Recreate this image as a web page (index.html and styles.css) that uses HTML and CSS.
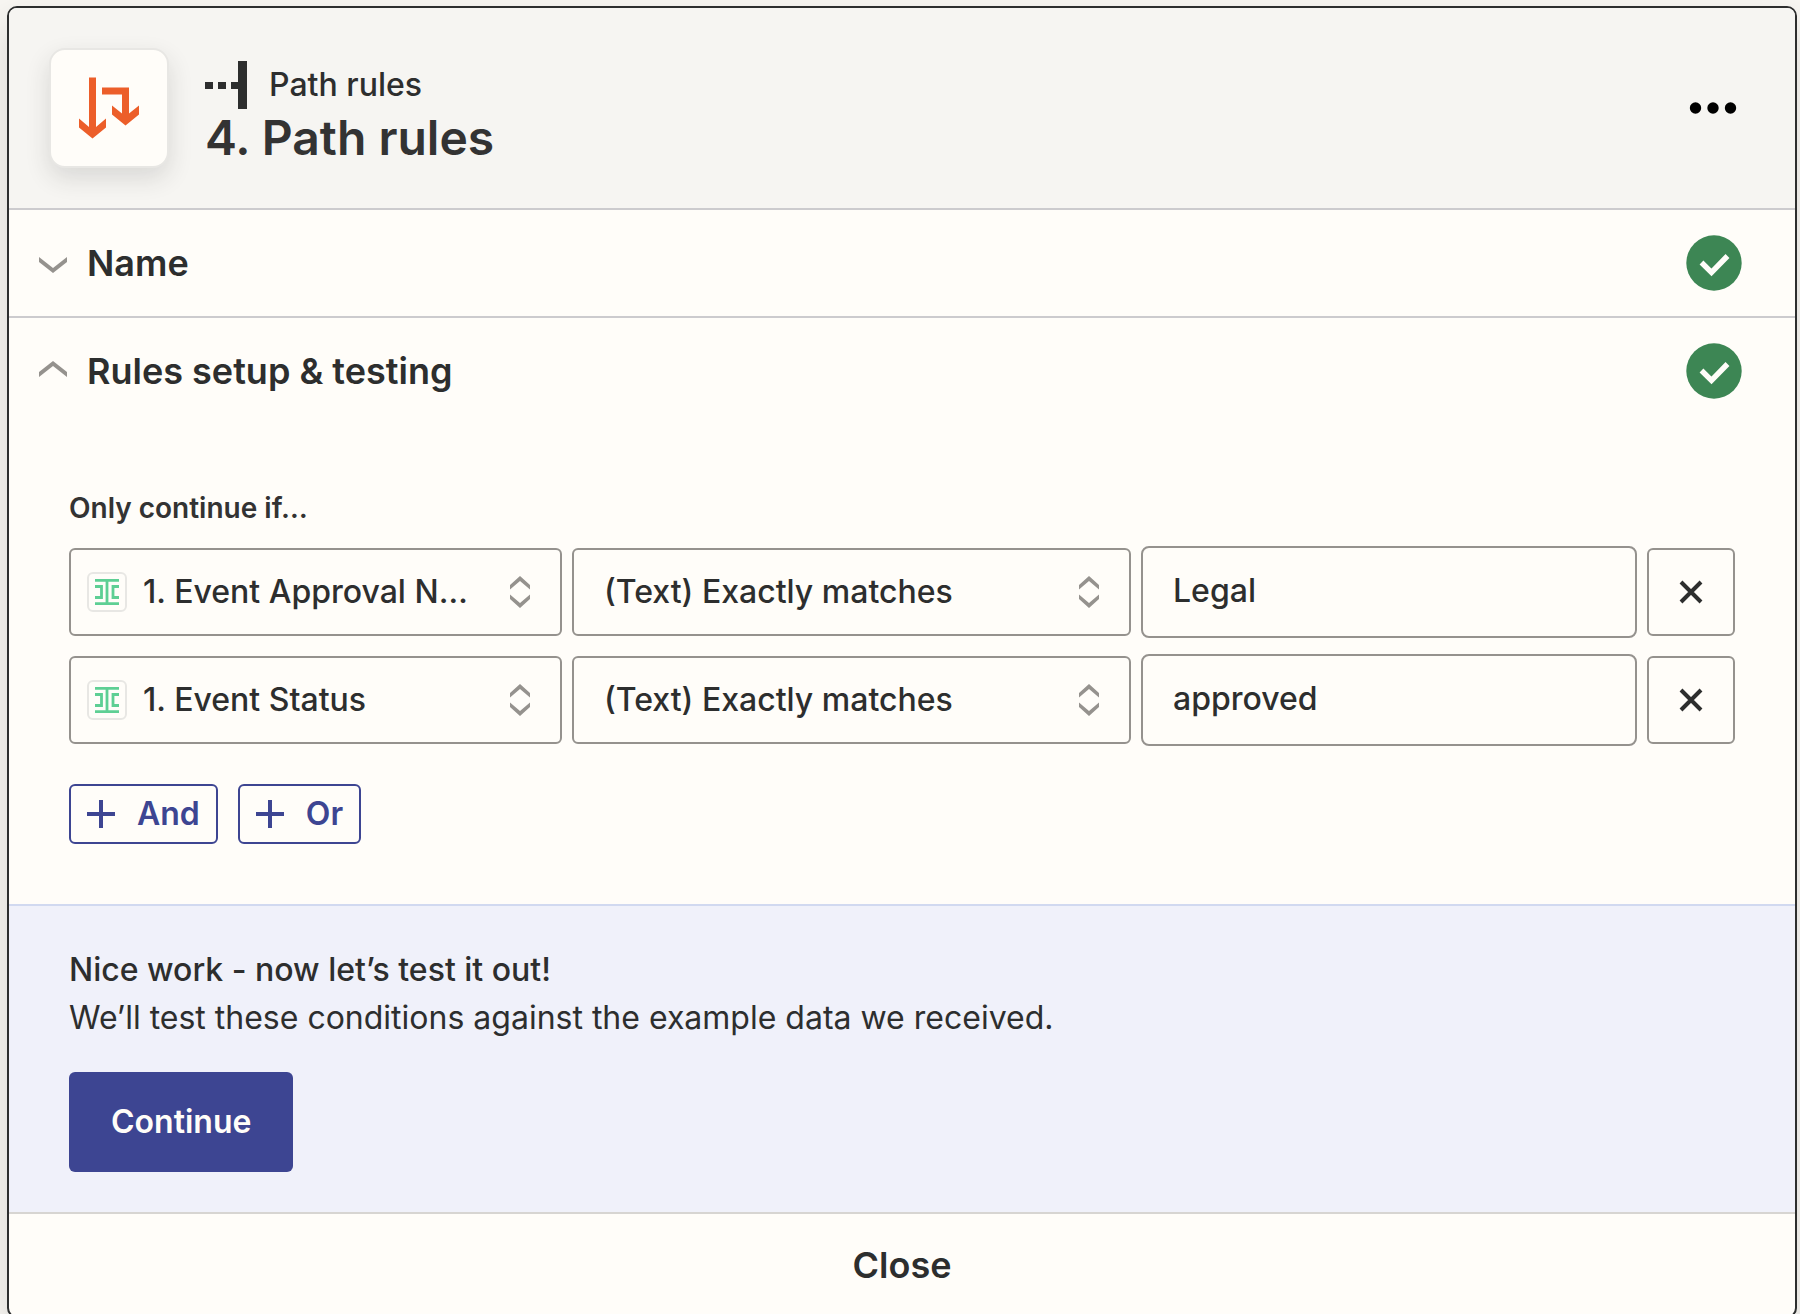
FILE: index.html
```html
<!DOCTYPE html>
<html lang="en">
<head>
  <meta charset="UTF-8">
  <meta name="viewport" content="width=device-width, initial-scale=1">
  <title>Path rules</title>
  <link rel="stylesheet" href="styles.css">
</head>
<body>
  <!-- shared icons -->
  <svg class="sprite" aria-hidden="true">
    <symbol id="icon-check" viewBox="0 0 56 56">
      <circle cx="28" cy="28" r="27.700" fill="#3d8654"/>
      <path d="M15.500 27.500L25.500 37.500L41.500 21" fill="none" stroke="#fffdf9" stroke-width="5.400"/>
    </symbol>
    <symbol id="icon-sort" viewBox="0 0 20 32">
      <path d="M0 9L10 0L20 9V13.500L10 5L0 13.500Z" fill="#95928e"/>
      <path d="M0 23L10 32L20 23V18.500L10 27L0 18.500Z" fill="#95928e"/>
    </symbol>
    <symbol id="icon-close" viewBox="0 0 24 24">
      <path d="M2 2L22 22M22 2L2 22" stroke="#2d2e2e" stroke-width="4"/>
    </symbol>
    <symbol id="icon-plus" viewBox="0 0 28 28">
      <path d="M14 0V28M0 14H28" stroke="#3d4592" stroke-width="4"/>
    </symbol>
    <symbol id="icon-event" viewBox="0 0 24 28">
      <path d="M0 2.300H24M0 25.700H24M12 2.300V25.700M0 8.500H6.500V19.500H0M24 8.500H18V19.500H24" fill="none" stroke="#5ecf94" stroke-width="2.800"/>
    </symbol>
  </svg>

  <main class="card">
    <header class="card-header">
      <div class="app-icon">
        <svg width="60" height="62" viewBox="79 78 60 61" fill="#ec5e2a" aria-hidden="true">
          <path d="M89 78H96V127.500L106 119V128L92.500 139L79 128V119L89 127.500Z"/>
          <path d="M102 88H129V114L139 106V115L125.500 126L112 115V106L122 114V95H102Z"/>
        </svg>
      </div>
      <div class="card-titles">
        <div class="step-type">
          <svg width="42" height="48" viewBox="0 0 42 48" fill="#2d2e2e" aria-hidden="true">
            <path d="M0 21H8V28H0ZM13 21H21V28H13ZM26 21H34V28H26ZM33 0H42V48H33Z"/>
          </svg>
          <span>Path rules</span>
        </div>
        <h1>4. Path rules</h1>
      </div>
      <button type="button" class="menu-button" aria-label="More options">
        <svg width="48" height="12" viewBox="0 0 48 12" aria-hidden="true">
          <circle cx="6.500" cy="6" r="5.700"/>
          <circle cx="24" cy="6" r="5.700"/>
          <circle cx="41.500" cy="6" r="5.700"/>
        </svg>
      </button>
    </header>

    <section class="section">
      <h2>
        <button type="button" class="section-toggle" aria-expanded="false">
          <svg class="chevron" viewBox="0 0 28 20" aria-hidden="true"><path d="M0 4L14 15L28 4V9L14 20L0 9Z"/></svg>
          <span>Name</span>
          <svg class="check" aria-hidden="true"><use href="#icon-check"/></svg>
        </button>
      </h2>
    </section>

    <section class="section">
      <h2>
        <button type="button" class="section-toggle" aria-expanded="true">
          <svg class="chevron" viewBox="0 0 28 20" aria-hidden="true"><path d="M0 16L14 5L28 16V11L14 0L0 11Z"/></svg>
          <span>Rules setup &amp; testing</span>
          <svg class="check" aria-hidden="true"><use href="#icon-check"/></svg>
        </button>
      </h2>

      <form class="rules">
        <h3>Only continue if…</h3>

        <div class="rule">
          <div class="select with-icon">
            <span class="field-icon"><svg width="24" height="28" aria-hidden="true"><use href="#icon-event"/></svg></span>
            <select aria-label="Field"><option>1. Event Approval N…</option></select>
            <svg class="sort" aria-hidden="true"><use href="#icon-sort"/></svg>
          </div>
          <div class="select">
            <select aria-label="Condition"><option>(Text) Exactly matches</option></select>
            <svg class="sort" aria-hidden="true"><use href="#icon-sort"/></svg>
          </div>
          <input type="text" aria-label="Value" value="Legal">
          <button type="button" class="remove" aria-label="Remove rule">
            <svg width="24" height="24" aria-hidden="true"><use href="#icon-close"/></svg>
          </button>
        </div>

        <div class="rule">
          <div class="select with-icon">
            <span class="field-icon"><svg width="24" height="28" aria-hidden="true"><use href="#icon-event"/></svg></span>
            <select aria-label="Field"><option>1. Event Status</option></select>
            <svg class="sort" aria-hidden="true"><use href="#icon-sort"/></svg>
          </div>
          <div class="select">
            <select aria-label="Condition"><option>(Text) Exactly matches</option></select>
            <svg class="sort" aria-hidden="true"><use href="#icon-sort"/></svg>
          </div>
          <input type="text" aria-label="Value" value="approved">
          <button type="button" class="remove" aria-label="Remove rule">
            <svg width="24" height="24" aria-hidden="true"><use href="#icon-close"/></svg>
          </button>
        </div>

        <div class="add-buttons">
          <button type="button" class="add">
            <svg width="28" height="28" aria-hidden="true"><use href="#icon-plus"/></svg>
            And
          </button>
          <button type="button" class="add">
            <svg width="28" height="28" aria-hidden="true"><use href="#icon-plus"/></svg>
            Or
          </button>
        </div>
      </form>
    </section>

    <section class="test">
      <p class="test-title">Nice work - now let’s test it out!</p>
      <p>We’ll test these conditions against the example data we received.</p>
      <button type="button" class="continue">Continue</button>
    </section>

    <button type="button" class="close">Close</button>
  </main>
</body>
</html>
```

FILE: styles.css
```css
* {
  box-sizing: border-box;
}
body {
  margin: 0;
  padding: 6px 3px 0 7px;
  background-color: #f9f7f3;
  color: #2d2e2e;
  font-family: Inter, "Liberation Sans", sans-serif;
  font-size: 32px;
  line-height: 48px;
}
h1, h2, h3, p {
  margin: 0;
}
button, input, select {
  font: inherit;
  color: inherit;
}
button {
  padding: 0;
  border: none;
  background: none;
  cursor: pointer;
}
svg {
  display: block;
  flex-shrink: 0;
}
.sprite {
  position: absolute;
  width: 0;
  height: 0;
}

.card {
  border: 2px solid #2d2e2e;
  border-radius: 10px;
  background-color: #fffdf9;
  box-shadow: 0 16px 40px rgba(45, 46, 46, 0.16);
  overflow: hidden;
}

/* header */
.card-header {
  display: flex;
  align-items: center;
  gap: 36px;
  padding: 40px 58px 40px 40px;
  border-bottom: 2px solid #cccbce;
  background-color: #f6f5f2;
}
.app-icon {
  display: flex;
  align-items: center;
  justify-content: center;
  width: 120px;
  height: 120px;
  border: 2px solid #e8e7e4;
  border-radius: 16px;
  background-color: #fffdf9;
  box-shadow: 0 10px 24px rgba(45, 46, 46, 0.14);
}
.card-titles {
  flex: 1;
  padding-top: 12px;
}
.step-type {
  display: flex;
  align-items: center;
  gap: 22px;
  font-weight: 500;
}
h1 {
  color: #333;
  font-size: 48px;
  font-weight: 600;
  line-height: 58px;
}

/* collapsible sections */
.section + .section {
  border-top: 2px solid #cccbce;
}
h2 {
  font-size: 36px;
  font-weight: 600;
}
.section-toggle {
  display: flex;
  align-items: center;
  gap: 20px;
  width: 100%;
  padding: 25px 53px 25px 30px;
  text-align: left;
}
.section-toggle span {
  flex: 1;
}
.chevron {
  width: 28px;
  height: 20px;
  fill: #95928e;
}
.check {
  width: 56px;
  height: 56px;
}

/* rules */
.rules {
  padding: 60px;
}
h3 {
  margin-bottom: 14px;
  color: #333;
  font-size: 28px;
  font-weight: 600;
}
.rule {
  display: grid;
  grid-template-columns: 493fr 559fr 496fr 88px;
  align-items: center;
  gap: 10px;
  font-weight: 500;
}
.rule + .rule {
  margin-top: 16px;
}
.select {
  position: relative;
}
.select select {
  width: 100%;
  height: 88px;
  padding: 0 72px 0 30px;
  border: 2px solid #95928e;
  border-radius: 6px;
  background-color: #fffdf9;
  appearance: none;
}
.select.with-icon select {
  padding-left: 72px;
}
.field-icon {
  position: absolute;
  top: 24px;
  left: 18px;
  display: flex;
  align-items: center;
  justify-content: center;
  width: 40px;
  height: 40px;
  border: 2px solid #e8e7e4;
  border-radius: 6px;
}
.sort {
  position: absolute;
  top: 28px;
  right: 32px;
  width: 20px;
  height: 32px;
}
.rule input {
  width: 100%;
  height: 92px;
  padding: 0 30px 4px;
  border: 2px solid #95928e;
  border-radius: 8px;
  background-color: #fffdf9;
}
.remove {
  display: flex;
  align-items: center;
  justify-content: center;
  height: 88px;
  border: 2px solid #95928e;
  border-radius: 6px;
}
.add-buttons {
  display: flex;
  gap: 20px;
  margin-top: 38px;
}
.add {
  display: flex;
  align-items: center;
  gap: 22px;
  height: 60px;
  padding: 0 16px;
  border: 2px solid #3d4592;
  border-radius: 6px;
  color: #3d4592;
  font-weight: 600;
}

/* test panel */
.test {
  padding: 40px 60px;
  border-top: 2px solid #d1d9f0;
  border-bottom: 2px solid #d7d5d2;
  background-color: #f0f1fa;
}
.test-title {
  font-weight: 500;
}
.continue {
  height: 100px;
  margin-top: 30px;
  padding: 0 42px;
  border-radius: 6px;
  background-color: #3d4592;
  color: #fffdf9;
  font-weight: 600;
}
.close {
  display: block;
  width: 100%;
  padding: 27px;
  font-size: 36px;
  font-weight: 600;
}
```
